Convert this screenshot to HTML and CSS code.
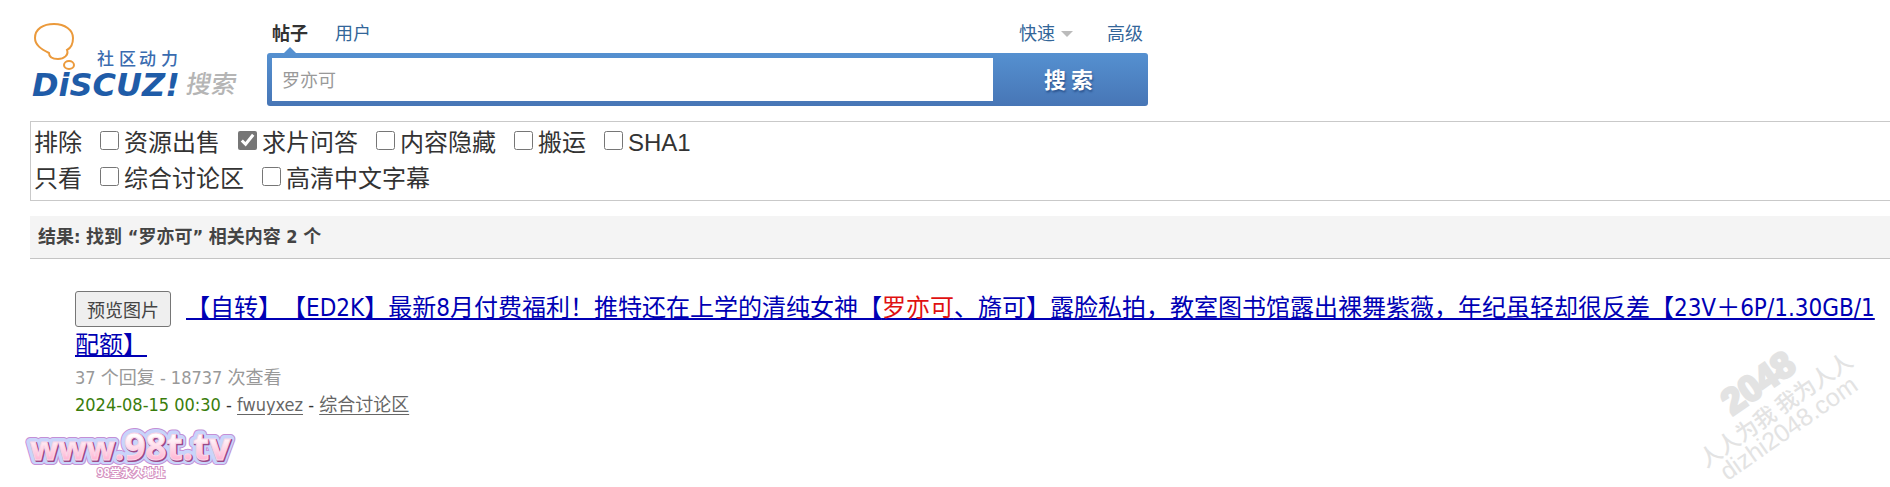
FILE: index.html
```html
<!DOCTYPE html>
<html lang="zh-CN">
<head>
<meta charset="utf-8">
<title>搜索 - 罗亦可</title>
<link rel="stylesheet" href="styles.css">
</head>
<body>
<header class="header">
  <a class="logo" href="#" aria-label="Discuz! 搜索">
    <svg width="212" height="86" viewBox="0 0 212 86">
      <path class="bubble" d="M19 39C11 35 5 31 5 24C5 15 13 10 24 10S43 16 43 24C43 30 41 34 37 36C39 41 34 45 28 45C22 45 19 43 19 39Z"/>
      <ellipse class="bubble" cx="39" cy="51" rx="5" ry="4"/>
      <text class="logo-slogan" x="67 89 109 131" y="51">社区动力</text>
      <text class="logo-word" x="2" y="82">DiSCUZ!</text>
      <text class="logo-search" x="155" y="79" transform="translate(14 0) skewX(-10)">搜索</text>
    </svg>
  </a>
  <form class="search">
    <nav class="tabs">
      <a class="tab active" href="#">帖子</a>
      <a class="tab" href="#">用户</a>
      <a class="tab quick" href="#">快速<span class="caret"></span></a>
      <a class="tab" href="#">高级</a>
    </nav>
    <div class="search-bar">
      <input class="search-input" type="text" value="罗亦可" aria-label="搜索内容">
      <button class="search-button" type="button">搜 索</button>
    </div>
  </form>
</header>
<main class="main">
  <section class="filters">
    <div class="filter-row">
      <span>排除</span>
      <label class="check"><input type="checkbox">资源出售</label>
      <label class="check"><input type="checkbox" checked>求片问答</label>
      <label class="check"><input type="checkbox">内容隐藏</label>
      <label class="check"><input type="checkbox">搬运</label>
      <label class="check"><input type="checkbox">SHA1</label>
    </div>
    <div class="filter-row">
      <span>只看</span>
      <label class="check"><input type="checkbox">综合讨论区</label>
      <label class="check"><input type="checkbox">高清中文字幕</label>
    </div>
  </section>
  <h2 class="summary">结果: 找到 “罗亦可” 相关内容 2 个</h2>
  <article class="result">
    <h3 class="result-title"><button class="preview" type="button">预览图片</button><a href="#">【自转】【ED2K】最新8月付费福利！推特还在上学的清纯女神【<em>罗亦可</em>、旖可】露脸私拍，教室图书馆露出裸舞紫薇，年纪虽轻却很反差【23V＋6P/1.30GB/1配额】</a></h3>
    <p class="stats">37 个回复 - 18737 次查看</p>
    <p class="meta"><time>2024-08-15 00:30</time> - <a href="#">fwuyxez</a> - <a href="#">综合讨论区</a></p>
  </article>
</main>
<svg class="site-mark" width="230" height="60" viewBox="0 0 230 60">
  <defs>
    <linearGradient id="pink" x1="0" y1="0" x2="0" y2="1">
      <stop offset="0.3" stop-color="#fff"/>
      <stop offset="0.8" stop-color="#ffb3d2"/>
    </linearGradient>
    <text id="name" class="name" x="10" y="35">www.<tspan class="big">98t.tv</tspan></text>
  </defs>
  <use class="rim" href="#name"/>
  <use class="halo" href="#name"/>
  <use class="shade" href="#name" x="1" y="1"/>
  <use class="face" href="#name"/>
  <text class="mark-note" x="77" y="52">98堂永久地址</text>
</svg>
<svg class="watermark" width="190" height="150" viewBox="0 0 190 150">
  <g transform="rotate(-35 95 75)">
    <text class="wm-number" x="96" y="51">2048</text>
    <text class="wm-slogan" x="95" y="79">人人为我 我为人人</text>
    <text class="wm-site" x="95" y="102">dizhi2048.com</text>
  </g>
</svg>
</body>
</html>
```
FILE: styles.css
```css
* {
  box-sizing: border-box;
}

body {
  margin: 0;
  position: relative;
  min-height: 100vh;
  background: #fff;
  color: #333;
  font-family: "DejaVu Sans Condensed", "Noto Sans CJK SC", sans-serif;
  font-size: 18px;
  text-spacing-trim: space-all;
}

.header {
  display: flex;
  gap: 25px;
  padding: 14px 0 0 30px;
}

.logo {
  height: 86px;
}

.bubble {
  fill: none;
  stroke: #eb9a3c;
  stroke-width: 2;
}

.logo-slogan {
  font: 500 17px "Noto Sans CJK SC", sans-serif;
  fill: #3a6cb0;
}

.logo-word {
  font: italic 700 32px "DejaVu Sans", sans-serif;
  fill: #1f5ca8;
}

.logo-search {
  font: 500 25px "Noto Sans CJK SC", sans-serif;
  fill: #b5b5b5;
}

.search {
  flex: 0 1 881px;
}

.tabs {
  display: flex;
  gap: 27px;
  height: 39px;
  padding: 0 5px;
  line-height: 39px;
}

.tab {
  position: relative;
  color: #369;
  text-decoration: none;
}

.active {
  color: #333;
  font-weight: 700;
}

.active::after {
  content: "";
  position: absolute;
  bottom: 0;
  left: 12px;
  border: 6px solid transparent;
  border-top: 0;
  border-bottom-color: #5590d0;
}

.quick {
  display: flex;
  align-items: center;
  gap: 6px;
  margin-left: auto;
}

.quick + .tab {
  margin-left: 7px;
}

.caret {
  border: 6px solid transparent;
  border-top-color: #bbb;
  border-bottom: 0;
}

.search-bar {
  display: flex;
  padding: 5px 0 5px 5px;
  border-radius: 3px;
  background: linear-gradient(#5590d0, #4776b6);
}

.search-input {
  flex: 1;
  min-width: 0;
  height: 43px;
  padding: 0 10px 2px;
  border: 0;
  outline: 0;
  background: #fff;
  color: #999;
  font: inherit;
}

.search-button {
  flex: 0 0 155px;
  padding: 0 4px 4px 0;
  border: 0;
  background: none;
  color: #fff;
  font: 700 22px "Noto Sans CJK SC", sans-serif;
  text-shadow: 1px 2px 2px #2c5590;
}

.main {
  margin: 15px 0 0 30px;
}

.filters {
  padding: 3px;
  border: 1px solid #c9c9c9;
  border-right: 0;
  font: 24px/36px "Liberation Sans", "Noto Sans CJK SC", sans-serif;
}

.filter-row {
  display: flex;
  flex-wrap: wrap;
  gap: 0 18px;
}

.check {
  display: flex;
  gap: 5px;
}

.check input {
  width: 19px;
  height: 19px;
  margin: 6px 0 0;
  accent-color: #767676;
}

.summary {
  margin: 15px 0 0;
  padding: 0 8px;
  border-bottom: 1px solid #c4c4c4;
  background: #f4f4f4;
  color: #444;
  font-size: 18px;
  line-height: 42px;
}

.result {
  padding: 31px 12px 0 45px;
}

.result-title {
  margin: 0;
  font-size: 24px;
  font-weight: 400;
  line-height: 37px;
}

.result-title a {
  color: #0000b4;
  text-decoration-thickness: 2px;
  text-underline-offset: 2px;
  text-decoration-skip-ink: none;
}

.result-title em {
  color: #e01010;
  font-style: normal;
}

.preview {
  width: 96px;
  height: 36px;
  margin: 0 15px 0 0;
  padding: 0;
  border: 1px solid #767676;
  border-radius: 3px;
  background: #efefef;
  color: #444;
  font: 18px "Noto Sans CJK SC", sans-serif;
  vertical-align: middle;
}

.stats,
.meta {
  margin: 0;
  line-height: 27px;
}

.stats {
  color: #999;
}

.meta time {
  color: #3a7d0c;
}

.meta a {
  color: #666;
  text-underline-offset: 3px;
}

.site-mark {
  position: absolute;
  top: 425px;
  left: 20px;
}

.name {
  font: 700 33px "Open Sans", sans-serif;
  stroke-linejoin: round;
}

.big {
  font-size: 37px;
}

.rim {
  fill: #c48fd6;
  stroke: #c48fd6;
  stroke-width: 10;
}

.halo {
  fill: #c9d4fa;
  stroke: #c9d4fa;
  stroke-width: 8;
}

.shade {
  fill: #8a3a78;
  stroke: #9a4a88;
  stroke-width: 2;
}

.face {
  fill: url(#pink);
  stroke: #fbd7e8;
  stroke-width: 1;
}

.mark-note {
  font: 700 11px "Noto Sans CJK SC", sans-serif;
  fill: #fff;
  stroke: #d48fc0;
  stroke-width: 2;
  paint-order: stroke;
}

.watermark {
  position: absolute;
  top: 338px;
  right: 17px;
  fill: #e3e3e3;
  text-anchor: middle;
}

.wm-number {
  font: 700 36px "Liberation Sans", sans-serif;
  stroke: #e3e3e3;
  stroke-width: 3;
}

.wm-slogan {
  font: 500 22px "Noto Sans CJK SC", sans-serif;
}

.wm-site {
  font: 25px "Liberation Sans", sans-serif;
}
```
